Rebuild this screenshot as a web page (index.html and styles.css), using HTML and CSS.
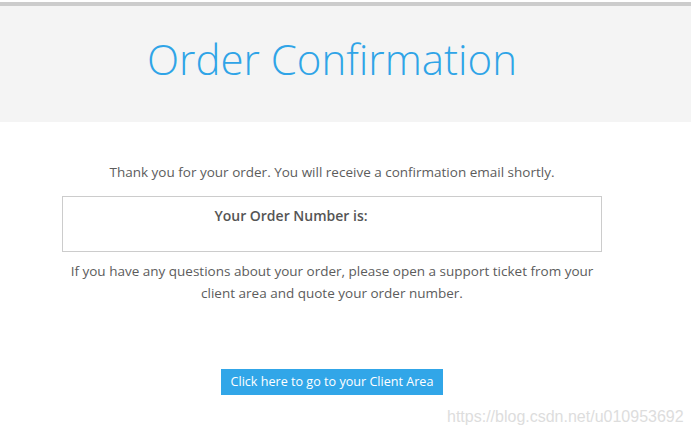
FILE: index.html
```html
<!DOCTYPE html>
<html lang="en">

<head>
  <meta charset="UTF-8">
  <meta name="viewport" content="width=device-width, initial-scale=1.0">
  <title>Order Confirmation</title>
  <link rel="stylesheet" href="styles.css">
</head>

<body>

  <!-- Header -->
  <div class="top-bar"></div>
  <div class="header">
    <h1>Order Confirmation</h1>
  </div>

  <!-- Confirmation -->
  <div class="main">
    <p class="intro">Thank you for your order. You will receive a confirmation email shortly.</p>

    <div class="order-box">
      <strong>Your Order Number is:</strong>
    </div>

    <p class="note">If you have any questions about your order, please open a support ticket from your client area and quote your order number.</p>

    <a class="btn-client" href="#">Click here to go to your Client Area</a>
  </div>

  <div class="watermark">https://blog.csdn.net/u010953692</div>

</body>

</html>
```

FILE: styles.css
```css
body {
  margin: 0;
  padding-top: 2px;
  background: #fff;
  font-family: "Open Sans", "Liberation Sans", sans-serif;
  color: #5c5c5c;
  position: relative;
  height: 439px;
  overflow: hidden;
}

.top-bar {
  height: 4px;
  background: #cccccc;
}

.header {
  background: #f4f4f4;
  height: 116px;
}

.header h1 {
  margin: 0;
  width: 664px;
  padding-top: 26px;
  text-align: center;
  font-size: 42px;
  font-weight: 300;
  line-height: 54px;
  color: #2fa4e7;
}

.main {
  width: 664px;
  display: flex;
  flex-direction: column;
  align-items: center;
  text-align: center;
  font-size: 13.5px;
  font-weight: 400;
  line-height: 22px;
}

.intro {
  margin: 39px 0 13px;
}

.order-box {
  box-sizing: border-box;
  width: 540px;
  height: 56px;
  border: 1px solid #cccccc;
  padding-top: 8px;
}

.order-box strong {
  font-size: 14px;
  font-weight: 600;
  color: #555;
  margin-right: 82px;
}

.note {
  margin: 8px 0 0;
  width: 540px;
}

.btn-client {
  margin-top: 65px;
  display: block;
  width: 222px;
  height: 26px;
  line-height: 26px;
  background: #31a6e8;
  color: #fff;
  text-decoration: none;
  font-size: 12.6px;
}

.watermark {
  position: absolute;
  left: 447px;
  top: 408px;
  font-family: "Liberation Sans", Arial, sans-serif;
  font-size: 16px;
  color: #dddddd;
  white-space: nowrap;
}
```
